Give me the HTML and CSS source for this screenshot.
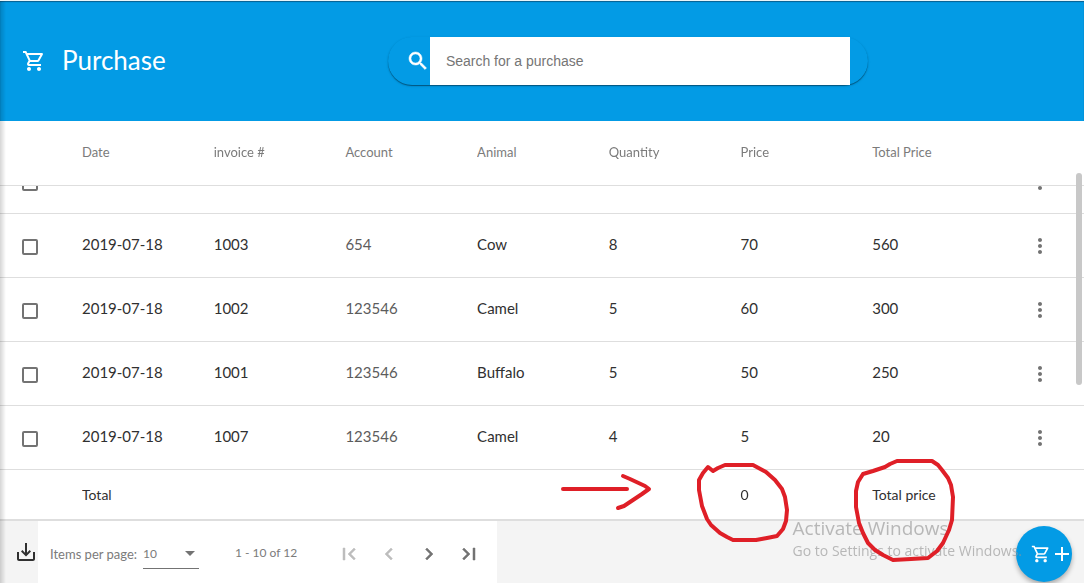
FILE: index.html
```html
<!DOCTYPE html>
<html lang="en">
<head>
    <meta charset="UTF-8">
    <meta name="viewport" content="width=device-width, initial-scale=1.0">
    <title>Purchase</title>
    <link rel="stylesheet" href="styles.css">
</head>
<body>
    <svg class="icon-defs" aria-hidden="true">
        <symbol id="icon-cart" viewBox="0 0 24 24">
            <path d="M15.55 13c.75 0 1.41-.41 1.75-1.03l3.58-6.49c.37-.66-.11-1.48-.87-1.48H5.21l-.94-2H1v2h2l3.6 7.59-1.35 2.44C4.52 15.37 5.48 17 7 17h12v-2H7l1.1-2h7.45zM6.16 6h12.15l-2.76 5H8.53L6.16 6zM7 18c-1.1 0-1.99.9-1.99 2S5.900 22 7 22s2-.9 2-2-.9-2-2-2zm10 0c-1.100 0-1.990.9-1.990 2s.890 2 1.990 2 2-.9 2-2-.9-2-2-2z"/>
        </symbol>
        <symbol id="icon-more" viewBox="0 0 24 24">
            <path d="M12 8c1.100 0 2-.9 2-2s-.9-2-2-2-2 .9-2 2 .9 2 2 2zm0 2c-1.100 0-2 .9-2 2s.9 2 2 2 2-.9 2-2-.9-2-2-2zm0 6c-1.100 0-2 .9-2 2s.9 2 2 2 2-.9 2-2-.9-2-2-2z"/>
        </symbol>
    </svg>

    <header class="page-header">
        <h1 class="logo">
            <svg class="icon"><use href="#icon-cart"/></svg>
            <span>Purchase</span>
        </h1>
        <div class="search-area">
            <div class="search-box">
                <label for="search" aria-label="Search">
                    <svg class="icon" viewBox="0 0 24 24"><path d="M15.500 14h-.79l-.28-.27C15.410 12.590 16 11.110 16 9.500 16 5.910 13.090 3 9.500 3S3 5.910 3 9.500 5.910 16 9.500 16c1.610 0 3.090-.59 4.230-1.570l.27.28v.79l5 4.990L20.490 19l-4.990-5zm-6 0C7.010 14 5 11.990 5 9.500S7.010 5 9.500 5 14 7.010 14 9.500 11.990 14 9.500 14z"/></svg>
                </label>
                <input type="text" id="search" placeholder="Search for a purchase">
            </div>
        </div>
    </header>

    <main class="content">
        <div class="table-scroll" id="table-scroll">
            <table class="purchase-table">
                <colgroup>
                    <col class="col-check">
                    <col span="7">
                    <col class="col-menu">
                </colgroup>
                <thead>
                    <tr>
                        <th></th>
                        <th>Date</th>
                        <th>invoice #</th>
                        <th>Account</th>
                        <th>Animal</th>
                        <th>Quantity</th>
                        <th>Price</th>
                        <th>Total Price</th>
                        <th></th>
                    </tr>
                </thead>
                <tbody>
                    <tr>
                        <td><input type="checkbox" aria-label="Select 1004"></td>
                        <td>2019-07-18</td>
                        <td>1004</td>
                        <td class="light">654</td>
                        <td>Cow</td>
                        <td>5</td>
                        <td>70</td>
                        <td>350</td>
                        <td><button class="menu-btn" aria-label="More"><svg class="icon"><use href="#icon-more"/></svg></button></td>
                    </tr>
                    <tr>
                        <td><input type="checkbox" aria-label="Select 1003"></td>
                        <td>2019-07-18</td>
                        <td>1003</td>
                        <td class="light">654</td>
                        <td>Cow</td>
                        <td>8</td>
                        <td>70</td>
                        <td>560</td>
                        <td><button class="menu-btn" aria-label="More"><svg class="icon"><use href="#icon-more"/></svg></button></td>
                    </tr>
                    <tr>
                        <td><input type="checkbox" aria-label="Select 1002"></td>
                        <td>2019-07-18</td>
                        <td>1002</td>
                        <td class="light">123546</td>
                        <td>Camel</td>
                        <td>5</td>
                        <td>60</td>
                        <td>300</td>
                        <td><button class="menu-btn" aria-label="More"><svg class="icon"><use href="#icon-more"/></svg></button></td>
                    </tr>
                    <tr>
                        <td><input type="checkbox" aria-label="Select 1001"></td>
                        <td>2019-07-18</td>
                        <td>1001</td>
                        <td class="light">123546</td>
                        <td>Buffalo</td>
                        <td>5</td>
                        <td>50</td>
                        <td>250</td>
                        <td><button class="menu-btn" aria-label="More"><svg class="icon"><use href="#icon-more"/></svg></button></td>
                    </tr>
                    <tr>
                        <td><input type="checkbox" aria-label="Select 1007"></td>
                        <td>2019-07-18</td>
                        <td>1007</td>
                        <td class="light">123546</td>
                        <td>Camel</td>
                        <td>4</td>
                        <td>5</td>
                        <td>20</td>
                        <td><button class="menu-btn" aria-label="More"><svg class="icon"><use href="#icon-more"/></svg></button></td>
                    </tr>
                </tbody>
                <tfoot>
                    <tr>
                        <td></td>
                        <td>Total</td>
                        <td></td>
                        <td></td>
                        <td></td>
                        <td></td>
                        <td>0</td>
                        <td>Total price</td>
                        <td></td>
                    </tr>
                </tfoot>
            </table>
        </div>
        <div class="scroll-thumb"></div>
    </main>

    <footer class="page-footer">
        <button class="export-btn" aria-label="Export">
            <svg class="icon" viewBox="0 0 24 24"><path d="M19 12v7H5v-7H3v7c0 1.100.9 2 2 2h14c1.100 0 2-.9 2-2v-7h-2zm-6 .67l2.590-2.580L17 11.500l-5 5-5-5 1.410-1.410L11 12.670V3h2v9.670z"/></svg>
        </button>
        <div class="paginator">
            <label for="page-size">Items per page:</label>
            <div class="select-wrap">
                <select id="page-size">
                    <option>5</option>
                    <option selected>10</option>
                    <option>25</option>
                </select>
            </div>
            <span class="range">1 - 10 of 12</span>
            <div class="page-buttons">
                <button disabled aria-label="First page"><svg class="icon" viewBox="0 0 24 24"><path d="M18.410 16.590L13.820 12l4.590-4.590L17 6l-6 6 6 6zM6 6h2v12H6z"/></svg></button>
                <button disabled aria-label="Previous page"><svg class="icon" viewBox="0 0 24 24"><path d="M15.410 7.410L14 6l-6 6 6 6 1.410-1.410L10.830 12z"/></svg></button>
                <button aria-label="Next page"><svg class="icon" viewBox="0 0 24 24"><path d="M10 6L8.590 7.410 13.170 12l-4.580 4.590L10 18l6-6z"/></svg></button>
                <button aria-label="Last page"><svg class="icon" viewBox="0 0 24 24"><path d="M5.590 7.410L10.180 12l-4.590 4.590L7 18l6-6-6-6zM16 6h2v12h-2z"/></svg></button>
            </div>
        </div>
    </footer>

    <button class="add-btn" aria-label="Add purchase">
        <svg class="icon"><use href="#icon-cart"/></svg>
        <svg class="icon-plus" viewBox="0 0 14 14"><path d="M6 0h2v6h6v2H8v6H6V8H0V6h6z"/></svg>
    </button>

    <div class="watermark">
        <div class="watermark-title">Activate Windows</div>
        <div>Go to Settings to activate Windows.</div>
    </div>

    <!-- Hand-drawn marks over the totals row -->
    <svg class="marks" viewBox="0 0 400 110" aria-hidden="true">
        <path d="M5 35H69"/>
        <path d="M65 22L72 25L87 32L91 35L84 40L75 46L66 52L60 54"/>
        <path d="M155 17L150 13L145 19L141 26L141 36L144 52L149 65L153 71L162 79L169 83L175 86H198L209 84L219 82L225 75L228 67L229 56L227 43L224 35L217 26L208 18L195 11H167L160 14L155 17"/>
        <path d="M305 20L300 28L298 37L298 53L301 69L305 79L310 89L317 96L325 101L335 106L353 105L370 104L379 97L385 89L391 76L394 66L395 43L393 31L390 24L384 16L380 11L374 7H339L332 10L327 13L315 17Z"/>
    </svg>

    <script>
        const tableScroll = document.getElementById('table-scroll');
        tableScroll.scrollTop = tableScroll.scrollHeight;
    </script>
</body>
</html>
```
FILE: styles.css
```css
* {
    box-sizing: border-box;
}

body {
    position: relative;
    display: flex;
    flex-direction: column;
    height: 100vh;
    margin: 0;
    border-top: 1px solid #e9f4f8;
    font-family: Lato, "Open Sans", sans-serif;
    font-size: 15px;
    color: #303030;
    background: #f4f4f4;
    overflow: hidden;
}

/* shadow cast by the side navigation */
body::before {
    content: "";
    position: absolute;
    top: 0;
    bottom: 0;
    left: 0;
    width: 6px;
    background: linear-gradient(to right, rgba(0, 0, 0, 0.16), rgba(0, 0, 0, 0));
    z-index: 5;
}

button {
    display: flex;
    align-items: center;
    justify-content: center;
    padding: 0;
    border: none;
    background: none;
    color: inherit;
    cursor: pointer;
}

.icon-defs {
    display: none;
}

.icon {
    display: block;
    width: 24px;
    height: 24px;
    fill: currentColor;
}

.page-header {
    display: flex;
    align-items: center;
    flex: none;
    height: 120px;
    padding-left: 22px;
    color: white;
    background: #039be5;
    box-shadow: inset 0 1px 1px #08608f;
}

.logo {
    display: flex;
    align-items: center;
    gap: 16px;
    margin: 0;
    padding-right: 6px;
    font-size: 26px;
    line-height: 30px;
    font-weight: 400;
}

.logo span {
    padding-bottom: 2px;
}

.search-area {
    display: flex;
    justify-content: center;
    flex: 1;
}

.search-box {
    display: flex;
    align-items: center;
    width: 480px;
    height: 48px;
    padding: 0 18px;
    border-radius: 28px;
    box-shadow: 0 1px 1px rgba(0, 0, 0, 0.4), 0 1px 3px rgba(0, 0, 0, 0.12);
}

.search-box .icon {
    stroke: currentColor;
    stroke-width: 0.5;
}

.search-box input {
    flex: 1;
    min-width: 0;
    height: 48px;
    padding: 0 16px;
    border: none;
    font-family: "Liberation Sans", Arial, sans-serif;
    font-size: 14px;
    color: #333;
    background: white;
}

.search-box input::placeholder {
    color: #757575;
}

.content {
    position: relative;
    flex: 1;
    min-height: 0;
    background: white;
}

.table-scroll {
    height: 100%;
    overflow-y: auto;
    scrollbar-width: none;
}

.scroll-thumb {
    position: absolute;
    top: 13%;
    right: 2px;
    width: 6px;
    height: 53%;
    border-radius: 3px;
    background: #c8c8c8;
    z-index: 3;
}

.purchase-table {
    width: 100%;
    table-layout: fixed;
    border-collapse: separate;
    border-spacing: 0;
}

.col-check {
    width: 82px;
}

.col-menu {
    width: 80px;
}

th,
td {
    height: 64px;
    padding: 0 0 4px;
    border-bottom: 1px solid #dedede;
    text-align: left;
    font-weight: 400;
}

th {
    position: sticky;
    top: 0;
    height: 65px;
    padding-bottom: 2px;
    font-size: 13px;
    color: #7b7b7b;
    background: white;
    z-index: 2;
}

td.light {
    color: #5c5c5c;
}

tfoot td {
    position: sticky;
    bottom: 0;
    height: 51px;
    padding: 0;
    border-bottom: 2px solid #dedede;
    font-size: 14px;
    background: white;
}

td input[type="checkbox"] {
    appearance: none;
    display: block;
    width: 16px;
    height: 16px;
    margin: 6px 0 0 22px;
    border: 2px solid #737373;
    border-radius: 2px;
}

td input[type="checkbox"]:checked {
    background: #039be5;
}

.menu-btn {
    width: 40px;
    height: 40px;
    margin: 4px 0 0 16px;
    color: #737373;
}

.page-footer {
    display: flex;
    flex: none;
    height: 62px;
}

.export-btn {
    width: 38px;
    padding-left: 14px;
    color: #303030;
}

.paginator {
    display: flex;
    align-items: center;
    padding: 4px 8px 0 12px;
    font-size: 13px;
    color: #7b7b7b;
    background: white;
}

.select-wrap {
    position: relative;
    width: 56px;
    margin: 0 36px 0 6px;
}

.select-wrap::after {
    content: "";
    position: absolute;
    top: 12px;
    right: 4px;
    border: 5px solid transparent;
    border-top-color: #737373;
    border-bottom: none;
    pointer-events: none;
}

.select-wrap select {
    appearance: none;
    display: block;
    width: 100%;
    height: 30px;
    padding: 0;
    border: none;
    border-bottom: 1px solid #737373;
    border-radius: 0;
    font: inherit;
    font-size: 12px;
    color: #7b7b7b;
    background: none;
}

.range {
    padding-bottom: 4px;
    font-size: 12px;
}

.page-buttons {
    display: flex;
    margin-left: 32px;
}

.page-buttons button {
    width: 40px;
    height: 40px;
    color: #737373;
}

.page-buttons .icon {
    stroke: currentColor;
    stroke-width: 0.5;
}

.page-buttons button:disabled {
    color: #bdbdbd;
}

.add-btn {
    position: absolute;
    right: 12px;
    bottom: 1px;
    gap: 4px;
    width: 56px;
    height: 56px;
    padding-left: 12px;
    border-radius: 50%;
    color: white;
    background: #039be5;
    box-shadow: 0 3px 5px rgba(0, 0, 0, 0.3);
}

.add-btn .icon {
    width: 20px;
    height: 20px;
}

.icon-plus {
    width: 14px;
    height: 14px;
    fill: currentColor;
}

.watermark {
    position: absolute;
    right: 62px;
    bottom: 22px;
    font-family: "Open Sans", "Noto Sans", sans-serif;
    font-size: 14px;
    line-height: 20px;
    color: rgba(150, 150, 150, 0.65);
    white-space: nowrap;
    pointer-events: none;
}

.watermark-title {
    font-size: 19px;
    line-height: 26px;
}

.marks {
    position: absolute;
    right: 126px;
    bottom: 19px;
    width: 400px;
    height: 110px;
    fill: none;
    stroke: #df1f27;
    stroke-width: 4;
    stroke-linecap: round;
    stroke-linejoin: round;
    pointer-events: none;
    z-index: 6;
}
```
